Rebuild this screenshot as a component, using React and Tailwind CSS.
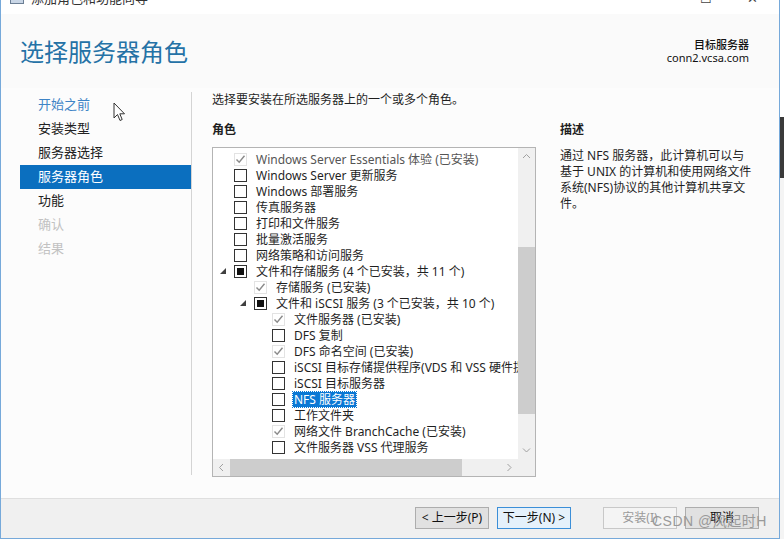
import React from "react";

const font = "font-['Noto_Sans','Noto_Sans_CJK_SC',sans-serif]";

const navItems = [
  { label: "开始之前", tone: "link" },
  { label: "安装类型", tone: "normal" },
  { label: "服务器选择", tone: "normal" },
  { label: "服务器角色", tone: "active" },
  { label: "功能", tone: "normal" },
  { label: "确认", tone: "disabled" },
  { label: "结果", tone: "disabled" },
];

// state: "off" | "on" (installed, greyed check) | "part" (black square)
const roles = [
  { level: 0, state: "on", label: "Windows Server Essentials 体验 (已安装)", dim: true },
  { level: 0, state: "off", label: "Windows Server 更新服务" },
  { level: 0, state: "off", label: "Windows 部署服务" },
  { level: 0, state: "off", label: "传真服务器" },
  { level: 0, state: "off", label: "打印和文件服务" },
  { level: 0, state: "off", label: "批量激活服务" },
  { level: 0, state: "off", label: "网络策略和访问服务" },
  { level: 0, state: "part", label: "文件和存储服务 (4 个已安装，共 11 个)", open: true },
  { level: 1, state: "on", label: "存储服务 (已安装)" },
  { level: 1, state: "part", label: "文件和 iSCSI 服务 (3 个已安装，共 10 个)", open: true },
  { level: 2, state: "on", label: "文件服务器 (已安装)" },
  { level: 2, state: "off", label: "DFS 复制" },
  { level: 2, state: "on", label: "DFS 命名空间 (已安装)" },
  { level: 2, state: "off", label: "iSCSI 目标存储提供程序(VDS 和 VSS 硬件提供程序)" },
  { level: 2, state: "off", label: "iSCSI 目标服务器" },
  { level: 2, state: "off", label: "NFS 服务器", selected: true },
  { level: 2, state: "off", label: "工作文件夹" },
  { level: 2, state: "on", label: "网络文件 BranchCache (已安装)" },
  { level: 2, state: "off", label: "文件服务器 VSS 代理服务" },
];

const Check = ({ state }) => (
  <div
    className={`w-[13px] h-[13px] shrink-0 border bg-white flex items-center justify-center ${
      state === "on" ? "border-[#e3e3e3]" : "border-[#333]"
    }`}
  >
    {state === "on" && (
      <svg width="11" height="11" viewBox="0 0 11 11">
        <path d="M1.5 5.5 L4.2 8.3 L9.5 1.8" fill="none" stroke="#8a8a8a" strokeWidth="1.4" />
      </svg>
    )}
    {state === "part" && <div className="w-[7px] h-[7px] bg-[#111]" />}
  </div>
);

const Tri = () => (
  <svg width="6" height="6" viewBox="0 0 6 6" className="shrink-0">
    <path d="M6 0 L6 6 L0 6 Z" fill="#404040" />
  </svg>
);

const Chevron = ({ dir }) => {
  const d = {
    up: "M1 5 L4.5 1.5 L8 5",
    down: "M1 1.5 L4.5 5 L8 1.5",
    left: "M5 1 L1.5 4.5 L5 8",
    right: "M1.5 1 L5 4.5 L1.5 8",
  }[dir];
  const vertical = dir === "up" || dir === "down";
  return (
    <svg width={vertical ? 9 : 7} height={vertical ? 7 : 9} viewBox={vertical ? "0 0 9 7" : "0 0 7 9"}>
      <path d={d} fill="none" stroke="#a0a0a0" strokeWidth="1" />
    </svg>
  );
};

const RoleRow = ({ r }) => {
  const pad = r.level === 0 ? "pl-[7px]" : r.level === 1 ? "pl-[27px]" : "pl-[59px]";
  return (
    <div className={`h-[16px] flex items-center whitespace-nowrap ${pad}`}>
      {r.level < 2 && (
        <div className="w-[13px] flex items-center">{r.open ? <Tri /> : null}</div>
      )}
      {r.level < 2 && <div className="w-[1px]" />}
      <Check state={r.state} />
      <span
        className={`ml-[8px] text-[12px] leading-[15px] px-[1px] ${
          r.selected
            ? "bg-[#0a78d4] text-white outline-1 outline-dotted outline-[#0a78d4]"
            : r.dim
            ? "text-[#555]"
            : "text-[#1f1f1f]"
        }`}
      >
        {r.label}
      </span>
    </div>
  );
};

const Button = ({ children, variant }) => {
  const cls =
    variant === "primary"
      ? "border-[#3c8fd8] bg-[#e5f1fb] text-[#111]"
      : variant === "disabled"
      ? "border-[#c8c8c8] bg-[#f4f4f4] text-[#9a9a9a]"
      : "border-[#adadad] bg-[#e1e1e1] text-[#111]";
  return (
    <div className={`w-[74px] h-[22px] border flex items-center justify-center text-[12px] leading-none ${cls}`}>
      {children}
    </div>
  );
};

export default function App() {
  return (
    <div className={`relative w-[784px] h-[539px] overflow-hidden flex bg-white ${font}`}>
      {/* window */}
      <div className="w-[780px] h-[539px] flex flex-col border-l border-r border-b border-[#76a9da] bg-[#fbfbfb]">
        {/* title bar, mostly scrolled off */}
        <div className="h-[14px] bg-white overflow-hidden flex items-start justify-between">
          <div className="flex items-center gap-[7px] pl-[9px] -mt-[11px]">
            <div className="w-[14px] h-[12px] border border-[#6c7f95] bg-[#c9d6e6]" />
            <span className="text-[13px] leading-[18px] text-[#333]">添加角色和功能向导</span>
          </div>
          <div className="flex items-start -mt-[10px] text-[#444] text-[13px] leading-[16px] pr-[4px]">
            <span className="w-[50px] text-center">—</span>
            <span className="w-[46px] text-center">☐</span>
            <span className="w-[46px] text-center">✕</span>
          </div>
        </div>

        {/* header */}
        <div className="h-[74px] flex justify-between items-start pl-[19px] pr-[30px] bg-[#fafafa]">
          <h1 className="mt-[22px] text-[24px] leading-[32px] text-[#2572a6] font-normal">选择服务器角色</h1>
          <div className="mt-[24px] text-right text-[11px] leading-[13px] text-[#111]">
            <div className="font-medium">目标服务器</div>
            <div>conn2.vcsa.com</div>
          </div>
        </div>

        {/* body */}
        <div className="flex-1 flex bg-[#fcfcfc]">
          <div className="w-[191px] mt-[4px] h-[383px] border-r border-[#d4d4d4] pt-[1px] pl-[19px]">
            {navItems.map((n) => (
              <div
                key={n.label}
                className={`h-[24px] pl-[18px] flex items-center text-[13px] ${
                  n.tone === "active"
                    ? "bg-[#0b6fbf] text-white"
                    : n.tone === "link"
                    ? "text-[#3e84c6]"
                    : n.tone === "disabled"
                    ? "text-[#c2c2c2]"
                    : "text-[#222]"
                }`}
              >
                {n.label}
              </div>
            ))}
          </div>

          <div className="flex-1 flex pl-[20px]">
            <div className="w-[324px]">
              <div className="mt-[4px] text-[12px] leading-[16px] text-[#1f1f1f]">
                选择要安装在所选服务器上的一个或多个角色。
              </div>
              <div className="mt-[14px] text-[12px] leading-[16px] font-bold text-[#1f1f1f]">角色</div>
              {/* list box */}
              <div className="mt-[9px] w-[324px] h-[330px] border border-[#b4b4b4] bg-white grid grid-cols-[1fr_17px] grid-rows-[1fr_17px]">
                <div className="overflow-hidden pt-[3px]">
                  {roles.map((r) => (
                    <RoleRow key={r.label} r={r} />
                  ))}
                </div>
                <div className="bg-[#f0f0f0] flex flex-col items-center">
                  <div className="h-[17px] flex items-center">
                    <Chevron dir="up" />
                  </div>
                  <div className="w-full h-[82px]" />
                  <div className="w-full h-[167px] bg-[#cdcdcd]" />
                  <div className="flex-1" />
                  <div className="h-[17px] flex items-center">
                    <Chevron dir="down" />
                  </div>
                </div>
                <div className="bg-[#f0f0f0] flex items-center">
                  <div className="w-[17px] flex justify-center">
                    <Chevron dir="left" />
                  </div>
                  <div className="w-[232px] h-full bg-[#cdcdcd]" />
                  <div className="flex-1" />
                  <div className="w-[17px] flex justify-center">
                    <Chevron dir="right" />
                  </div>
                </div>
                <div className="bg-[#f0f0f0]" />
              </div>
            </div>

            <div className="ml-[24px] w-[190px]">
              <div className="mt-[34px] text-[12px] leading-[16px] font-bold text-[#1f1f1f]">描述</div>
              <div className="mt-[10px] text-[12px] leading-[16px] text-[#1f1f1f] whitespace-nowrap">
                <div>通过 NFS 服务器，此计算机可以与</div>
                <div>基于 UNIX 的计算机和使用网络文件</div>
                <div>系统(NFS)协议的其他计算机共享文</div>
                <div>件。</div>
              </div>
            </div>
          </div>
        </div>

        {/* footer */}
        <div className="h-[40px] border-t border-[#dfdfdf] bg-[#f0f0f0] flex items-center justify-end pr-[20px]">
          <div className="flex items-center gap-[8px] -mt-[2px]">
            <Button>&lt; 上一步(P)</Button>
            <Button variant="primary">下一步(N) &gt;</Button>
            <div className="w-[16px]" />
            <Button variant="disabled">安装(I)</Button>
            <Button>取消</Button>
          </div>
        </div>
      </div>

      {/* strip of desktop behind the window */}
      <div className="flex-1 flex flex-col bg-[#f4f4f4]">
        <div className="h-[117px] bg-white" />
        <div className="h-[61px] bg-[#3a3a3a]" />
      </div>

      {/* mouse pointer */}
      <svg className="absolute left-[113px] top-[102px]" width="13" height="20" viewBox="0 0 13 20">
        <path d="M1 1 L1 16 L4.5 12.5 L7 18.5 L9.2 17.5 L6.8 11.8 L11.5 11.8 Z" fill="white" stroke="#333" strokeWidth="1" />
      </svg>

      {/* watermark */}
      <div className="absolute left-[652px] top-[511px] text-[14px] leading-[20px] text-[#9a9a9a] font-['Liberation_Sans','Noto_Sans_CJK_SC',sans-serif] tracking-[0.5px]">
        CSDN @风起时H
      </div>
    </div>
  );
}
